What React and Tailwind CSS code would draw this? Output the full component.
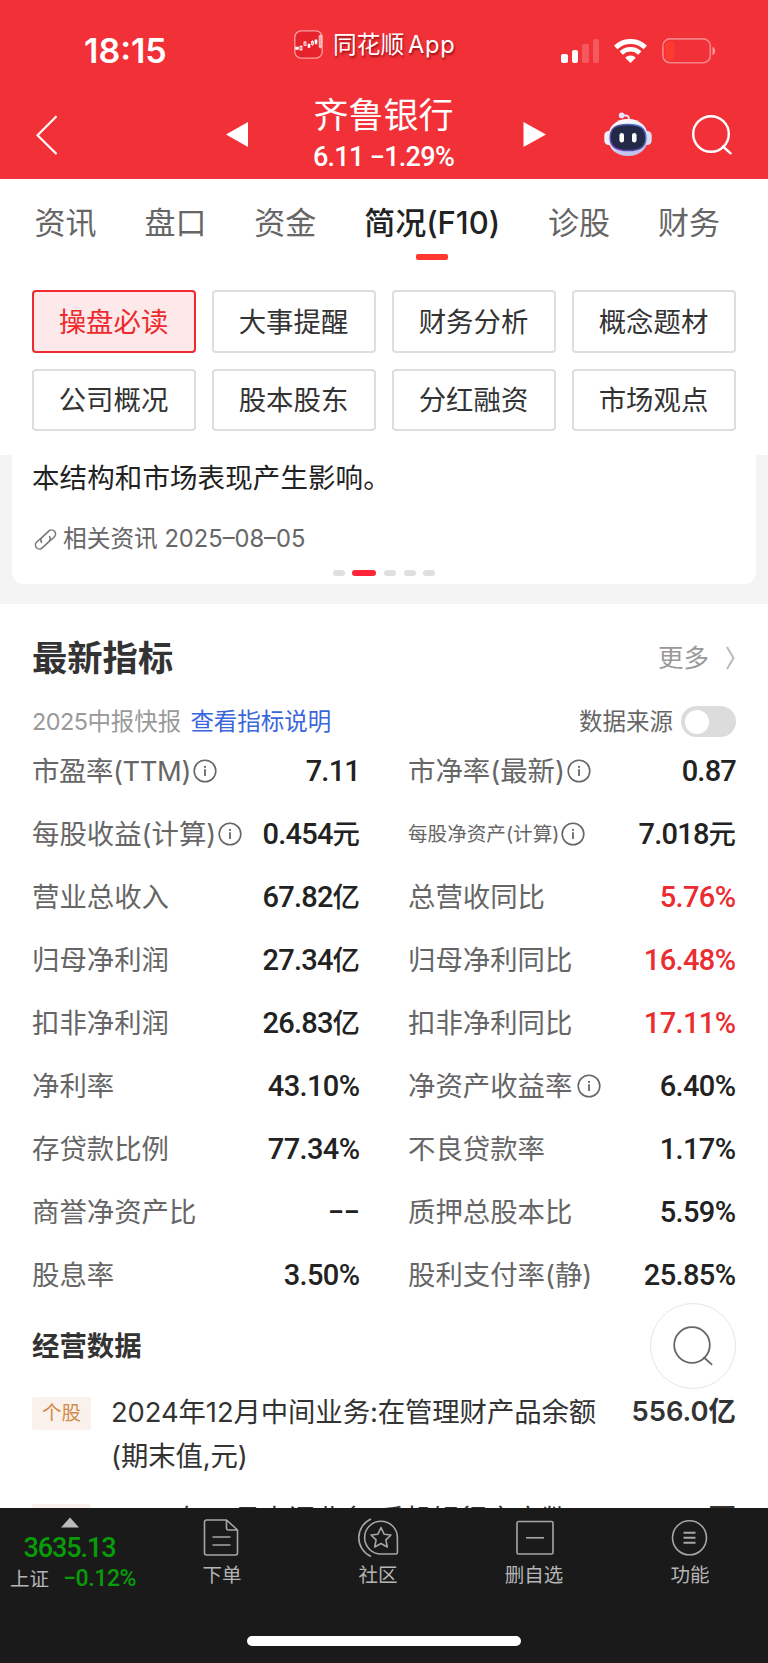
const tabs = [
  { label: "资讯" },
  { label: "盘口" },
  { label: "资金" },
  { label: "简况(F10)", active: true },
  { label: "诊股" },
  { label: "财务" },
]

const menus = ["操盘必读", "大事提醒", "财务分析", "概念题材", "公司概况", "股本股东", "分红融资", "市场观点"]

const metrics = [
  { label: "市盈率(TTM)", value: "7.11", info: true },
  { label: "市净率(最新)", value: "0.87", info: true },
  { label: "每股收益(计算)", value: "0.454", unit: "元", info: true },
  { label: "每股净资产(计算)", value: "7.018", unit: "元", info: true, small: true },
  { label: "营业总收入", value: "67.82", unit: "亿" },
  { label: "总营收同比", value: "5.76%", up: true },
  { label: "归母净利润", value: "27.34", unit: "亿" },
  { label: "归母净利同比", value: "16.48%", up: true },
  { label: "扣非净利润", value: "26.83", unit: "亿" },
  { label: "扣非净利同比", value: "17.11%", up: true },
  { label: "净利率", value: "43.10%" },
  { label: "净资产收益率", value: "6.40%", info: true },
  { label: "存贷款比例", value: "77.34%" },
  { label: "不良贷款率", value: "1.17%" },
  { label: "商誉净资产比", value: "−−" },
  { label: "质押总股本比", value: "5.59%" },
  { label: "股息率", value: "3.50%" },
  { label: "股利支付率(静)", value: "25.85%" },
]

const operations = [
  { lines: ["2024年12月中间业务:在管理财产品余额", "(期末值,元)"], value: "556.0亿" },
  { lines: ["2024年12月中间业务:手机银行客户数"], value: "380.4万" },
]

const InfoIcon = ({ tight }) => (
  <svg
    className={`shrink-0 ${tight ? "ml-[2px]" : "ml-[5px]"}`}
    width="24"
    height="24"
    viewBox="0 0 24 24"
    fill="none"
    stroke="#666"
    strokeWidth="1.6"
  >
    <circle cx="12" cy="12" r="10.8" />
    <path d="M12 10.3V17" strokeWidth="1.8" />
    <path d="M12 7V8.8" strokeWidth="2" />
  </svg>
)

const SearchIcon = ({ size, width }) => (
  <svg width={size} height={size} viewBox="0 0 40 40" fill="none" stroke="currentColor" strokeWidth={width} strokeLinecap="round">
    <circle cx="19" cy="19" r="17.8" />
    <path d="M31 31.5L38.6 38.3" />
  </svg>
)

const StatusBar = () => (
  <div className="flex h-[76px] items-start">
    <div className="ml-[84px] mt-[31px] w-[210px] text-[34px] leading-[40px] font-semibold">18:15</div>
    <svg className="mt-[30px]" width="29" height="29" viewBox="0 0 29 29" fill="none" stroke="#fff">
      <rect x="0.8" y="0.8" width="27.4" height="27.4" rx="6.5" fill="#e6222a" stroke="#f9a0a0" strokeWidth="1.3" />
      <rect x="1.6" y="17" width="3" height="2.6" fill="#fff" strokeWidth="0.5" />
      <rect x="6" y="16.5" width="2" height="3.4" strokeWidth="0.8" />
      <path d="M7 15v6M11 11v5M15 13v5M18.5 10v6M22 9v6M26.3 4.5v14" strokeWidth="0.6" />
      <rect x="10" y="12" width="2" height="3.4" strokeWidth="0.8" />
      <rect x="14" y="14.3" width="2" height="3" fill="#fff" strokeWidth="0.6" />
      <rect x="17.5" y="11.5" width="2" height="3" strokeWidth="0.8" />
      <rect x="21" y="10" width="2" height="3.6" fill="#fff" strokeWidth="0.6" />
      <rect x="25.2" y="6" width="2" height="11" strokeWidth="0.8" />
    </svg>
    <div className="ml-[10px] mt-[27px] w-[228px] text-[23.7px] leading-[36px] [text-shadow:1px_2px_2px_rgba(90,0,0,0.6)]">
      同花顺<span className="ml-[4px] tracking-[0.7px]">App</span>
    </div>
    {/* Signal */}
    <div className="mt-[39px] flex h-6 items-end gap-[4px]">
      <i className="h-[9px] w-[6.5px] rounded-[2px] bg-white" />
      <i className="h-[13.5px] w-[6.5px] rounded-[2px] bg-white" />
      <i className="h-[19px] w-[6.5px] rounded-[2px] bg-white/20" />
      <i className="h-[24px] w-[6.5px] rounded-[2px] bg-white/20" />
    </div>
    {/* Wifi */}
    <svg className="ml-[15px] mt-[39px]" width="33" height="24" viewBox="0 0 33 24" fill="none" stroke="#fff" strokeWidth="5">
      <path d="M1.7 8.5a21.2 21.2 0 0 1 29.6 0" />
      <path d="M7.2 14a13.4 13.4 0 0 1 18.6 0" strokeWidth="4.6" />
      <path d="M16.5 24L11.2 18.7a7.6 7.6 0 0 1 10.6 0Z" fill="#fff" stroke="none" />
    </svg>
    {/* Battery */}
    <svg className="ml-[15px] mt-[38px]" width="55" height="26" viewBox="0 0 55 26">
      <rect x="0.9" y="0.9" width="47.4" height="23.8" rx="7" fill="none" stroke="#fff" strokeOpacity="0.4" strokeWidth="1.6" />
      <rect x="3.4" y="3.4" width="9.2" height="18.8" rx="4" fill="#ff3b30" />
      <path d="M50.5 8.7c3.6 1.4 3.6 7 0 8.4z" fill="#fff" fillOpacity="0.5" />
    </svg>
  </div>
)

const RobotIcon = () => (
  <svg width="48" height="45" viewBox="0 0 48 45">
    <defs>
      <linearGradient id="shell" x1="0" y1="0" x2="0.3" y2="1">
        <stop offset="0" stopColor="#fff" />
        <stop offset="0.6" stopColor="#e4e4f8" />
        <stop offset="1" stopColor="#bfc2ea" />
      </linearGradient>
      <linearGradient id="rim" x1="0" y1="1" x2="1" y2="0">
        <stop offset="0" stopColor="#7a3fd8" />
        <stop offset="0.5" stopColor="#4a4a88" />
        <stop offset="1" stopColor="#4d7cf0" />
      </linearGradient>
    </defs>
    <path d="M18 3.5h3.5q3.5 0 3.7 4" fill="none" stroke="#e4e2f6" strokeWidth="1.8" />
    <circle cx="17.6" cy="3.4" r="2.8" fill="#e8e6f8" />
    <rect x="0.3" y="19" width="9" height="14" rx="4.5" fill="#f0f0fb" />
    <rect x="38.7" y="19" width="9" height="14" rx="4.5" fill="#dcdcf4" />
    <path d="M24 7C36 7 44 14.5 44 25.5S36 44 24 44 4 36.5 4 25.5 12 7 24 7Z" fill="url(#shell)" />
    <path d="M24 12.5C36 12.5 41.8 16 41.8 25.5S36 38.5 24 38.5 6.2 35 6.2 25.5 12 12.5 24 12.5Z" fill="#232a48" stroke="url(#rim)" strokeWidth="1.5" />
    <rect x="15.5" y="21" width="4.5" height="9.5" rx="2.2" fill="#fff" />
    <rect x="28" y="21" width="4.5" height="9.5" rx="2.2" fill="#fff" />
  </svg>
)

const Header = () => (
  <header className="h-[179px] shrink-0 bg-[#f23038] text-white">
    <StatusBar />
    <div className="flex h-[103px] items-start">
      <svg className="ml-[36px] mt-[39px]" width="22" height="40" viewBox="0 0 22 40" fill="none" stroke="#fff" strokeWidth="2.2">
        <path d="M20.5 1.2L1.5 20.2L20.5 39" />
      </svg>
      <svg className="ml-[168px] mt-[46px]" width="22" height="25" viewBox="0 0 22 25" fill="#fff">
        <path d="M22 0V25L0 12.5Z" />
      </svg>
      <div className="w-[275px] pr-[4px] text-center">
        <div className="mt-[14px] text-[35px] leading-[50px]">齐鲁银行</div>
        <div className="-mt-px font-['Roboto'] text-[27px] leading-[36px] font-medium tracking-[-0.7px]">6.11 −1.29%</div>
      </div>
      <svg className="mt-[46px]" width="23" height="25" viewBox="0 0 23 25" fill="#fff">
        <path d="M0.5 0V25L23 12.5Z" />
      </svg>
      <div className="ml-[58px] mt-[36px]">
        <RobotIcon />
      </div>
      <div className="ml-[40px] mt-[39px]">
        <SearchIcon size={40} width={2.4} />
      </div>
    </div>
  </header>
)

const Metric = ({ label, value, unit, info, up, small }) => (
  <div className="flex h-[63px] items-center justify-between">
    <div className="flex items-center text-[#666]">
      <span className={small ? "text-[19.6px]" : label.includes("TTM") ? "text-[27.4px] tracking-[-0.4px]" : "text-[27.4px]"}>{label}</span>
      {info && <InfoIcon tight={label.endsWith(")")} />}
    </div>
    <div
      className={`text-[29px] font-medium font-['Roboto','Noto_Sans_CJK_SC',sans-serif] ${up ? "text-[#eb2d31]" : "text-[#222]"} ${
        /[%−]/.test(value) ? "pr-[0.5px] tracking-[-0.6px]" : "tracking-[-0.8px]"
      }`}
    >
      {value}
      {unit && <span className="text-[27.4px] tracking-normal">{unit}</span>}
    </div>
  </div>
)

const Operation = ({ lines, value }) => (
  <div className="mb-[21px] flex items-start text-[27.4px] leading-[43.5px] text-[#333]">
    <span className="mt-[5px] mr-5 flex h-[33px] w-[59px] items-center justify-center rounded-[2px] bg-[#faf1ec] text-[19.5px] text-[#cf8c48]">
      个股
    </span>
    <div className="-mt-px flex-1 whitespace-nowrap">
      {lines.map((line) => (
        <div key={line} className="tracking-[-0.1px]">{line}</div>
      ))}
    </div>
    <span className="-mt-[2px] font-semibold">{value}</span>
  </div>
)

const NavItem = ({ label, children }) => (
  <div className="flex w-[156px] flex-col items-center">
    <svg width="42" height="41" viewBox="0 0 42 41" fill="none" stroke="#a6a6a6" strokeWidth="1.6" strokeLinejoin="round">
      {children}
    </svg>
    <span className="mt-[3px] text-[19.5px] leading-[28px] text-[#b5b5b5]">{label}</span>
  </div>
)

const BottomBar = () => (
  <nav className="h-[155px] shrink-0 bg-[#1a1a1a]">
    <div className="flex h-[128px] pt-[9px]">
      <div className="mr-[5px] flex w-[139px] flex-col items-center text-[#089c08]">
        <svg width="18" height="11" viewBox="0 0 18 11" fill="#bcbcbc">
          <path d="M9 0.5L18 10.5H0Z" />
        </svg>
        <div className="mt-[4px] font-['Roboto'] text-[27px] leading-[32px] font-medium tracking-[-1.1px]">3635.13</div>
        <div className="flex w-full items-center pl-[10px] leading-[28px]">
          <span className="mt-px text-[19.5px] text-[#b5b5b5]">上证</span>
          <span className="ml-[14px] font-['Roboto'] text-[23px] font-medium tracking-[-0.4px]">−0.12%</span>
        </div>
      </div>
      <NavItem label="下单">
        <path d="M25.5 3H5.5a2 2 0 0 0-2 2V36a2 2 0 0 0 2 2H34.5a2 2 0 0 0 2-2V13Z M25.5 3V11a2 2 0 0 0 2 2H36.5 M11.5 20H29.5 M11.5 28H29.5" />
      </NavItem>
      <NavItem label="社区">
        <path d="M14 2A20.5 20.5 0 0 0 14 39.5" />
        <path d="M24 37A16.4 16.4 0 1 1 40.4 20.6V35.5a1.5 1.5 0 0 1-1.5 1.5Z" />
        <path d="M24 10.5L27.1 17.2L34 18L28.9 22.8L30.3 30L24 26.5L17.7 30L19.1 22.8L14 18L20.9 17.2Z" />
      </NavItem>
      <NavItem label="删自选">
        <rect x="4" y="4.5" width="36" height="32.5" rx="1.5" />
        <path d="M13 20.8H31" />
      </NavItem>
      <NavItem label="功能">
        <circle cx="20.5" cy="20.8" r="17" />
        <path d="M14.5 15.8H26.5M14.5 20.8H26.5M14.5 25.8H26.5" strokeWidth="1.9" />
      </NavItem>
    </div>
    <div className="mx-auto h-[10px] w-[274px] rounded-full bg-white" />
  </nav>
)

const App = () => {
  return (
    <div className="flex h-[1663px] w-[768px] flex-col overflow-hidden bg-white font-['Inter','Noto_Sans_CJK_SC',sans-serif]">
      <Header />

      {/* Tabs */}
      <div className="flex h-[111px] shrink-0 items-start justify-between pt-[21px] pr-[48px] pl-[34.5px] text-[31px] leading-[46px] text-[#666]">
        {tabs.map((tab) => (
          <div key={tab.label} className={tab.active ? "flex flex-col items-center font-medium text-[#222]" : ""}>
            {tab.label}
            {tab.active && <i className="mt-[8px] h-[6px] w-8 rounded-[2px] bg-[#ff3830]" />}
          </div>
        ))}
      </div>

      {/* Section menu */}
      <div className="grid h-[165px] shrink-0 grid-cols-4 content-start gap-4 px-8 text-[27.4px] text-[#333]">
        {menus.map((menu, i) => (
          <div
            key={menu}
            className={`flex h-[62.5px] items-center justify-center rounded-[4px] border-2 pt-[2px] pr-px ${
              i === 0 ? "border-[#ee2a2e] bg-[#fee9ea] text-[#ee2a2e]" : "border-[#dedede]"
            }`}
          >
            {menu}
          </div>
        ))}
      </div>

      {/* News card */}
      <div className="h-[148.5px] shrink-0 bg-[#f4f4f4] px-3">
        <div className="flex h-[129px] flex-col rounded-b-xl bg-white px-5">
          <p className="mt-[3px] text-[27.5px] leading-[40px] tracking-[0.1px] text-[#222]">本结构和市场表现产生影响。</p>
          <div className="mt-[23px] flex items-center text-[23.7px] leading-[36px] text-[#666]">
            <svg className="mr-[6px] ml-[2px]" width="23" height="23" viewBox="0 0 24 24" fill="none" stroke="#777" strokeWidth="1.6" strokeLinecap="round">
              <g transform="translate(12 12) rotate(-43)">
                <path d="M3 4.3H8.5a4.2 4.2 0 0 0 0 -8.4H-1.5a4.2 4.2 0 0 0 -3.6 3.4" />
                <path d="M-3 -4.3H-8.5a4.2 4.2 0 0 0 0 8.4H1.5a4.2 4.2 0 0 0 3.6 -3.4" />
              </g>
            </svg>
            相关资讯 2025–08–05
          </div>
          <div className="mt-[13px] flex justify-center gap-[7.7px]">
            <i className="h-[6px] w-3 rounded-full bg-[#dfdfdf]" />
            <i className="h-[6px] w-6 rounded-full bg-[#ff2436]" />
            <i className="h-[6px] w-3 rounded-full bg-[#dfdfdf]" />
            <i className="h-[6px] w-3 rounded-full bg-[#dfdfdf]" />
            <i className="h-[6px] w-3 rounded-full bg-[#dfdfdf]" />
          </div>
        </div>
      </div>

      <main className="relative h-[904.5px] shrink-0 overflow-hidden px-8">
        <div className="flex h-[93px] items-center justify-between pt-[17px]">
          <h2 className="text-[35.3px] leading-[50px] font-bold text-[#333]">最新指标</h2>
          <div className="-mt-px flex items-center text-[25.5px] leading-[36px] text-[#999]">
            更多
            <svg className="mr-[1px] ml-[17px]" width="9" height="24" viewBox="0 0 9 24" fill="none" stroke="#bbb" strokeWidth="2">
              <path d="M1 1L7.5 12L1 23" />
            </svg>
          </div>
        </div>

        <div className="flex h-[43.5px] items-center pt-[7px] text-[23.5px] leading-[36px]">
          <span className="text-[#999]">
            <span className="tracking-[-0.6px]">2025</span>中报快报
          </span>
          <span className="ml-[9px] text-[#3a66dc]">查看指标说明</span>
          <span className="ml-auto text-[#666]">数据来源</span>
          <span className="ml-2 flex h-[31px] w-[55px] items-center rounded-full bg-[#dcdcdc] pl-1">
            <i className="size-6 rounded-full bg-white" />
          </span>
        </div>

        <div className="grid grid-cols-2 gap-x-12">
          {metrics.map((metric) => (
            <Metric key={metric.label} {...metric} />
          ))}
        </div>

        <h3 className="mt-[19px] mb-[26px] text-[27.4px] leading-[40px] font-bold text-[#333]">经营数据</h3>
        {operations.map((item) => (
          <Operation key={item.value} {...item} />
        ))}

        {/* Floating search */}
        <button className="absolute top-[699.5px] right-8 flex size-[86px] items-center justify-center rounded-full border-[1.5px] border-[#e6e6e6] bg-white text-[#666]">
          <SearchIcon size={40} width={1.8} />
        </button>
      </main>

      <BottomBar />
    </div>
  )
}

export default App
